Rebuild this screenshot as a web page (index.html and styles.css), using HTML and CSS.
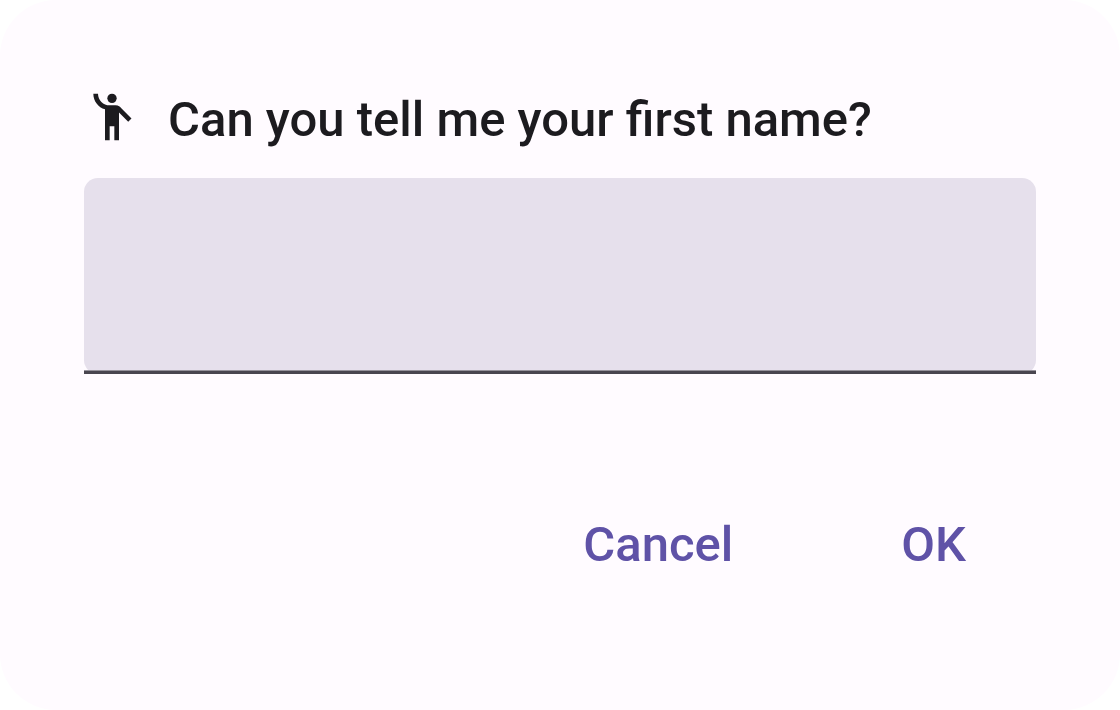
FILE: index.html
```html
<!DOCTYPE html>
<html lang="en">
<head>
<meta charset="utf-8">
<meta name="viewport" content="width=device-width, initial-scale=1">
<title>First name</title>
<link rel="stylesheet" href="styles.css">
</head>
<body>
<form class="dialog" role="dialog" aria-labelledby="dialog-title">
  <div class="header">
    <svg class="icon" viewBox="0 0 24 24" aria-hidden="true">
      <circle cx="12" cy="4" r="2"/>
      <path d="M15.89 8.11C15.5 7.72 14.83 7 13.53 7h-2.54C8.24 6.99 6 4.75 6 2H4c0 3.16 2.11 5.84 5 6.71V22h2v-6h2v6h2V10.05L18.95 14l1.41-1.41-4.47-4.48z"/>
    </svg>
    <label class="title" id="dialog-title" for="first-name">Can you tell me your first name?</label>
  </div>
  <div class="field">
    <input class="field-input" id="first-name" type="text">
  </div>
  <div class="actions">
    <button class="action" type="button">Cancel</button>
    <button class="action" type="submit">OK</button>
  </div>
</form>
</body>
</html>
```
FILE: styles.css
```css
* {
  box-sizing: border-box;
}

body {
  margin: 0;
  background: #fff;
  font-family: Roboto, sans-serif;
}

.dialog {
  display: flex;
  flex-direction: column;
  min-height: 100vh;
  padding: 84px;
  border-radius: 56px;
  background: #fffbff;
}

.header {
  display: flex;
  align-items: flex-start;
  gap: 28px;
  padding: 5px 0 27px;
}

.icon {
  width: 56px;
  height: 56px;
  flex: none;
  fill: #1c1b1f;
}

.title {
  color: #1c1b1f;
  font-size: 49px;
  font-weight: 500;
  line-height: 62px;
}

.field {
  position: relative;
}

/* Square-ended underline across the rounded input */
.field::after {
  content: "";
  position: absolute;
  right: 0;
  bottom: 0;
  left: 0;
  height: 3px;
  border-top: 1px solid #96929b;
  background: #49454f;
}

.field-input {
  display: block;
  width: 100%;
  height: 196px;
  padding: 0 56px;
  border: 0;
  border-radius: 14px;
  outline: 0;
  background: #e6e0ec;
  color: #1c1b1f;
  font: inherit;
  font-size: 56px;
}

.actions {
  display: flex;
  justify-content: flex-end;
  gap: 28px;
  margin-top: 100px;
}

.action {
  height: 140px;
  padding: 0 70px;
  border: 0;
  border-radius: 70px;
  background: transparent;
  color: #5f52a7;
  font: inherit;
  font-size: 49px;
  font-weight: 500;
}
```
